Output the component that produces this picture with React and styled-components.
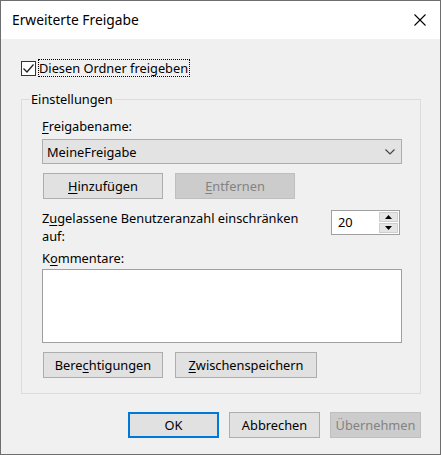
import { createGlobalStyle, styled } from "styled-components";

const GlobalStyle = createGlobalStyle`
  html, body {
    margin: 0;
    padding: 0;
    background: #ffffff;
  }
`;

const Window = styled.div`
  width: 441px;
  height: 455px;
  box-sizing: border-box;
  border: 1px solid #6e6e6e;
  display: flex;
  flex-direction: column;
  background: #f0f0f0;
  font-family: "Noto Sans", "Open Sans", sans-serif;
  font-size: 12.8px;
  color: #000;
`;

const TitleBar = styled.div`
  height: 38px;
  flex: none;
  background: #ffffff;
  display: flex;
  align-items: center;
  justify-content: space-between;
  padding: 0 14px 0 11px;
`;

const Title = styled.span`
  font-size: 13.8px;
  line-height: 18px;
`;

const Body = styled.div`
  flex: 1;
  display: flex;
  flex-direction: column;
  padding: 20px 19px 0 20px;
`;

const CheckRow = styled.label`
  display: flex;
  align-items: center;
  gap: 2px;
  height: 18px;
`;

const CheckBox = styled.span`
  width: 15px;
  height: 15px;
  box-sizing: border-box;
  border: 1px solid #333333;
  background: #ffffff;
  display: flex;
  align-items: center;
  justify-content: center;
`;

const FocusText = styled.span`
  border: 1px dotted #000;
  padding: 0 1px 0 0;
  line-height: 16px;
`;

const Group = styled.fieldset`
  margin: 14px 0 0 0;
  width: 400px;
  box-sizing: border-box;
  border: 1px solid #dcdcdc;
  padding: 11px 18px 15px 20px;
  display: flex;
  flex-direction: column;
`;

const Legend = styled.legend`
  margin-left: -12px;
  padding: 0 1px;
  line-height: 16px;
`;

const FieldLabel = styled.div`
  line-height: 16px;
  margin-top: ${(p) => p.$top || 0}px;
`;

const Combo = styled.div`
  margin-top: 5px;
  width: 360px;
  height: 25px;
  box-sizing: border-box;
  border: 1px solid #adadad;
  background: #e3e3e3;
  display: flex;
  align-items: center;
  justify-content: space-between;
  padding: 0 6px 0 4px;
`;

const ButtonRow = styled.div`
  display: flex;
  gap: 12px;
  margin-top: 9px;
  margin-left: 1px;
`;

const Button = styled.button`
  width: ${(p) => p.$w || 120}px;
  height: 26px;
  box-sizing: border-box;
  padding: 0;
  font: inherit;
  line-height: 16px;
  color: ${(p) => (p.disabled ? "#838383" : "#000")};
  background: ${(p) => (p.disabled ? "#cccccc" : "#e1e1e1")};
  border: ${(p) =>
    p.$default ? "2px solid #0078d7" : p.disabled ? "1px solid #bfbfbf" : "1px solid #adadad"};
  border-radius: 0;
`;

const LimitRow = styled.div`
  margin-top: 11px;
  width: 360px;
  display: flex;
  justify-content: space-between;
  align-items: flex-start;
`;

const LimitText = styled.div`
  line-height: 17.5px;
`;

const Spin = styled.div`
  width: 69px;
  height: 25px;
  box-sizing: border-box;
  margin-right: 2px;
  border: 1px solid #a0a0a0;
  background: #ffffff;
  display: flex;
  align-items: stretch;
`;

const SpinValue = styled.span`
  flex: 1;
  padding-left: 6px;
  line-height: 23px;
`;

const SpinButtons = styled.div`
  width: 19px;
  display: flex;
  flex-direction: column;
  gap: 1px;
  padding: 1px 1px 1px 0;
`;

const SpinButton = styled.div`
  flex: 1;
  background: #e5e5e5;
  border: 1px solid #cfcfcf;
  display: flex;
  align-items: center;
  justify-content: center;
`;

const TextArea = styled.div`
  margin-top: 3px;
  width: 360px;
  height: 74px;
  box-sizing: border-box;
  border: 1px solid #a0a0a0;
  background: #ffffff;
`;

const Footer = styled.div`
  margin-top: 18px;
  display: flex;
  justify-content: flex-end;
  gap: 10px;
`;

const Key = styled.span`
  text-decoration: underline;
  text-underline-offset: 2px;
`;

function CloseIcon() {
  return (
    <svg width="12" height="12" viewBox="0 0 12 12">
      <path d="M0.5 0.5 L11.5 11.5 M11.5 0.5 L0.5 11.5" stroke="#000" strokeWidth="1.1" />
    </svg>
  );
}

function Check() {
  return (
    <svg width="13" height="13" viewBox="0 0 13 13">
      <path d="M1.5 6.5 L5 10 L11.5 2.5" fill="none" stroke="#222" strokeWidth="1.3" />
    </svg>
  );
}

function Chevron() {
  return (
    <svg width="10" height="6" viewBox="0 0 10 6">
      <path d="M0.5 0.5 L5 5 L9.5 0.5" fill="none" stroke="#444" strokeWidth="1.2" />
    </svg>
  );
}

function Arrow({ down }) {
  return (
    <svg width="7" height="4" viewBox="0 0 7 4">
      <path d={down ? "M0 0 H7 L3.5 4 Z" : "M0 4 H7 L3.5 0 Z"} fill="#000" />
    </svg>
  );
}

export default function App() {
  return (
    <>
      <GlobalStyle />
      <Window>
        <TitleBar>
          <Title>Erweiterte Freigabe</Title>
          <CloseIcon />
        </TitleBar>
        <Body>
          <CheckRow>
            <CheckBox>
              <Check />
            </CheckBox>
            <FocusText>Diesen Ordner freigeben</FocusText>
          </CheckRow>

          <Group>
            <Legend>Einstellungen</Legend>
            <FieldLabel>
              <Key>F</Key>reigabename:
            </FieldLabel>
            <Combo>
              <span>MeineFreigabe</span>
              <Chevron />
            </Combo>
            <ButtonRow>
              <Button>
                <Key>H</Key>inzufügen
              </Button>
              <Button disabled>
                <Key>E</Key>ntfernen
              </Button>
            </ButtonRow>
            <LimitRow>
              <LimitText>
                Z<Key>u</Key>gelassene Benutzeranzahl einschränken
                <br />
                auf:
              </LimitText>
              <Spin>
                <SpinValue>20</SpinValue>
                <SpinButtons>
                  <SpinButton>
                    <Arrow />
                  </SpinButton>
                  <SpinButton>
                    <Arrow down />
                  </SpinButton>
                </SpinButtons>
              </Spin>
            </LimitRow>
            <FieldLabel $top={5}>
              K<Key>o</Key>mmentare:
            </FieldLabel>
            <TextArea />
            <ButtonRow>
              <Button>
                Bere<Key>c</Key>htigungen
              </Button>
              <Button $w={142}>
                <Key>Z</Key>wischenspeichern
              </Button>
            </ButtonRow>
          </Group>

          <Footer>
            <Button $w={91} $default>
              OK
            </Button>
            <Button $w={91}>Abbrechen</Button>
            <Button $w={91} disabled>
              Übernehmen
            </Button>
          </Footer>
        </Body>
      </Window>
    </>
  );
}
